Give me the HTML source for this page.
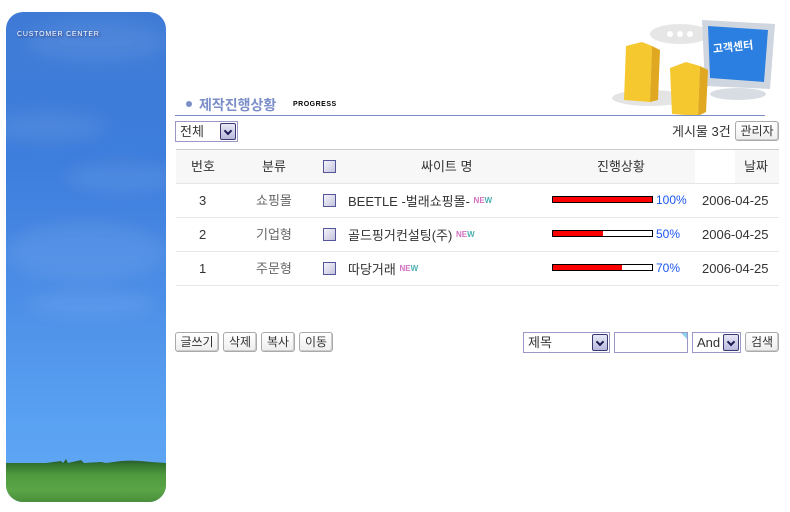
<!DOCTYPE html>
<html><head><meta charset="utf-8">
<style>
*{margin:0;padding:0;box-sizing:border-box}
body{width:790px;height:512px;background:#fff;position:relative;overflow:hidden;font-family:"Liberation Sans","Noto Sans CJK KR","NanumGothic",sans-serif;font-size:12px;color:#333}
.a{position:absolute}
.side{left:6px;top:12px;width:160px;height:490px;border-radius:17px;overflow:hidden;background:linear-gradient(180deg,#3f7bd6 0%,#3d7ddc 30%,#4a8ce6 55%,#5aa2f2 85%,#62aaf5 100%)}
.cl{position:absolute;background:rgba(255,255,255,.08);border-radius:50%;filter:blur(8px)}
.grass{position:absolute;left:0;top:451px;width:160px;height:39px;background:linear-gradient(180deg,#2f6e2c,#4f9a3e 30%,#5aa545 70%,#4a8e3a)}
.trees{position:absolute;left:0;top:444px;width:160px;height:9px}
.btn{position:absolute;height:20px;border:1px solid #aaa;border-radius:3px;background:linear-gradient(#fff,#eee);font-size:12px;line-height:18px;text-align:center;color:#333;box-shadow:inset -1px -1px 0 #ccc}
.sel{position:absolute;height:21px;border:1px solid #9a98c8;background:#fff;font-size:13px;line-height:19px;padding-left:4px}
.arr{position:absolute;right:1px;top:1px;width:16px;height:17px;border:1px solid #3a3870;background:linear-gradient(#e8e8f6,#b8b8dc);border-radius:2px}
.arr:after{content:"";position:absolute;left:4px;top:4px;width:4px;height:4px;border-right:2px solid #1a1850;border-bottom:2px solid #1a1850;transform:rotate(45deg)}
.cb{position:absolute;width:13px;height:13px;border:1px solid #555599;background:linear-gradient(135deg,#f4f4fb,#c4c4dc)}
.hl{position:absolute;left:176px;width:603px;height:1px;background:#e6e6e6}
.t{position:absolute;font-size:13px;line-height:16px}
.bar{position:absolute;left:552px;width:101px;height:7px;border:1px solid #000;background:#fff}
.bar i{display:block;height:100%;background:#f00}
.pc{position:absolute;left:656px;color:#1a55ee;font-size:12px}
.new{font-size:8px;font-weight:bold;color:#d070c0;vertical-align:3px}
.new b{color:#4ab0b0}
</style></head><body>
<div class="a side">
 <div class="cl" style="left:20px;top:10px;width:140px;height:40px"></div>
 <div class="cl" style="left:-20px;top:100px;width:120px;height:30px"></div>
 <div class="cl" style="left:60px;top:150px;width:110px;height:30px"></div>
 <div class="cl" style="left:0px;top:210px;width:160px;height:60px"></div>
 <div class="cl" style="left:20px;top:280px;width:130px;height:25px"></div>
 <div style="position:absolute;left:11px;top:19px;color:#fff;font-size:7px;letter-spacing:.8px;text-shadow:1px 1px 2px #336">CUSTOMER CENTER</div>
 <svg class="trees" viewBox="0 0 160 9"><path d="M0 8 L20 7.5 L40 7 L55 5 L57 7 L60 3 L62 7 L75 4 L78 7 L95 6 L100 7 L115 5 L125 4.5 L135 5 L145 6 L160 7 L160 9 L0 9Z" fill="#2f6430"/></svg>
 <div class="grass"></div>
</div>
<svg class="a" style="left:610px;top:14px" width="175" height="102" viewBox="0 0 175 102">
 <ellipse cx="70" cy="20" rx="30" ry="10" fill="#e6e6e6"/>
 <circle cx="60" cy="20" r="3" fill="#fff"/><circle cx="70" cy="20" r="3" fill="#fff"/><circle cx="80" cy="20" r="3" fill="#fff"/>
 <path d="M92 6 L165 10 L160 75 L95 72Z" fill="#cfd6e0"/>
 <path d="M98 12 L158 16 L154 68 L100 64Z" fill="#2a7fe0"/>
 <ellipse cx="128" cy="80" rx="28" ry="6" fill="#d8dde4"/>
 <text x="103" y="37" fill="#fff" font-size="11" font-weight="bold" transform="rotate(-6 120 35)" font-family="Noto Sans CJK KR,sans-serif">고객센터</text>
 <ellipse cx="40" cy="84" rx="38" ry="8" fill="#e4e4e4"/>
 <path d="M16 32 L32 28 L42 32 L40 88 L14 86Z" fill="#f5c830"/>
 <path d="M42 32 L50 36 L48 86 L40 88Z" fill="#e0a820"/>
 <path d="M60 54 L76 48 L90 52 L88 102 L62 100Z" fill="#f5c830"/>
 <path d="M90 52 L98 56 L96 98 L88 102Z" fill="#e0a820"/>
</svg>
<div class="a" style="left:186px;top:101px;width:6px;height:6px;border-radius:50%;background:#7b8ec8"></div>
<div class="a" style="left:199px;top:95px;color:#7b8ec8;font-size:14px;font-weight:bold">제작진행상황</div>
<div class="a" style="left:293px;top:101px;font-size:7px;font-weight:bold;letter-spacing:.5px;color:#000">PROGRESS</div>
<div class="a" style="left:175px;top:115px;width:590px;height:1px;background:#7b8ec8"></div>

<div class="sel" style="left:175px;top:121px;width:63px">전체<div class="arr"></div></div>
<div class="a t" style="left:672px;top:124px">게시물 3건</div>
<div class="btn" style="left:735px;top:121px;width:44px">관리자</div>

<div class="a" style="left:176px;top:149px;width:603px;height:1px;background:#ccc"></div>
<div class="a" style="left:176px;top:150px;width:519px;height:33px;background:#f7f7f7"></div>
<div class="a" style="left:735px;top:150px;width:44px;height:33px;background:#f7f7f7"></div>
<div class="t" style="left:191px;top:159px">번호</div>
<div class="t" style="left:262px;top:159px">분류</div>
<div class="cb" style="left:323px;top:160px"></div>
<div class="t" style="left:421px;top:159px">싸이트 명</div>
<div class="t" style="left:597px;top:159px">진행상황</div>
<div class="t" style="left:744px;top:159px">날짜</div>
<div class="hl" style="top:183px"></div>

<div class="t" style="left:199px;top:193px">3</div>
<div class="t" style="left:256px;top:193px;color:#666">쇼핑몰</div>
<div class="cb" style="left:323px;top:194px"></div>
<div class="t" style="left:348px;top:193px">BEETLE -벌래쇼핑몰- <span class="new">NE<b>W</b></span></div>
<div class="bar" style="top:196px"><i style="width:100%"></i></div>
<div class="pc" style="top:193px">100%</div>
<div class="t" style="left:702px;top:193px">2006-04-25</div>
<div class="hl" style="top:217px"></div>

<div class="t" style="left:199px;top:227px">2</div>
<div class="t" style="left:256px;top:227px;color:#666">기업형</div>
<div class="cb" style="left:323px;top:228px"></div>
<div class="t" style="left:348px;top:227px">골드핑거컨설팅(주) <span class="new">NE<b>W</b></span></div>
<div class="bar" style="top:230px"><i style="width:50%"></i></div>
<div class="pc" style="top:227px">50%</div>
<div class="t" style="left:702px;top:227px">2006-04-25</div>
<div class="hl" style="top:251px"></div>

<div class="t" style="left:199px;top:261px">1</div>
<div class="t" style="left:256px;top:261px;color:#666">주문형</div>
<div class="cb" style="left:323px;top:262px"></div>
<div class="t" style="left:348px;top:261px">따당거래 <span class="new">NE<b>W</b></span></div>
<div class="bar" style="top:264px"><i style="width:70%"></i></div>
<div class="pc" style="top:261px">70%</div>
<div class="t" style="left:702px;top:261px">2006-04-25</div>
<div class="hl" style="top:285px"></div>

<div class="btn" style="left:175px;top:332px;width:44px">글쓰기</div>
<div class="btn" style="left:223px;top:332px;width:34px">삭제</div>
<div class="btn" style="left:261px;top:332px;width:34px">복사</div>
<div class="btn" style="left:299px;top:332px;width:34px">이동</div>
<div class="sel" style="left:523px;top:332px;width:87px">제목<div class="arr"></div></div>
<div class="sel" style="left:614px;top:332px;width:74px"></div>
<div class="a" style="left:681px;top:333px;width:0;height:0;border-top:6px solid #8cd0f0;border-left:6px solid transparent"></div>
<div class="sel" style="left:692px;top:332px;width:49px">And<div class="arr"></div></div>
<div class="btn" style="left:745px;top:332px;width:34px">검색</div>
</body></html>
